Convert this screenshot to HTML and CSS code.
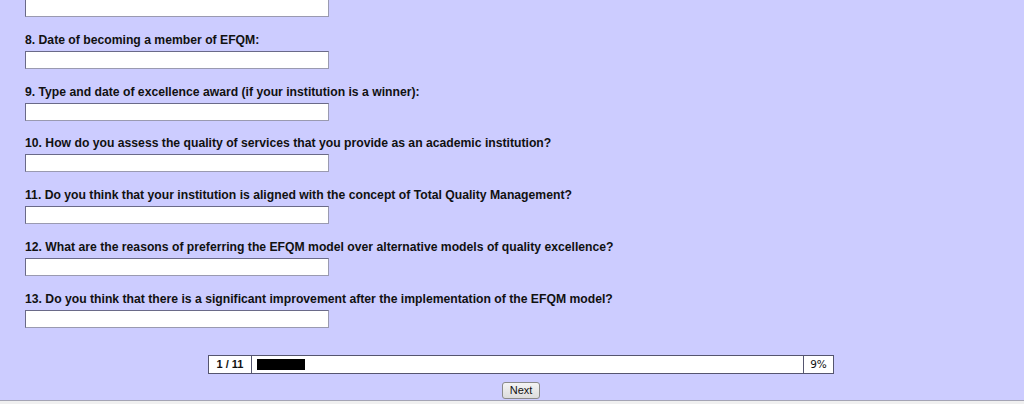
FILE: index.html
```html
<!DOCTYPE html>
<html>
<head>
<meta charset="utf-8">
<link rel="stylesheet" href="styles.css">
</head>
<body>
<div class="page">
  <div class="questions">
    <div class="item item-cut"><input class="field" type="text"></div>
    <div class="item"><label class="q">8. Date of becoming a member of EFQM:</label><input class="field" type="text"></div>
    <div class="item"><label class="q">9. Type and date of excellence award (if your institution is a winner):</label><input class="field" type="text"></div>
    <div class="item"><label class="q">10. How do you assess the quality of services that you provide as an academic institution?</label><input class="field" type="text"></div>
    <div class="item"><label class="q">11. Do you think that your institution is aligned with the concept of Total Quality Management?</label><input class="field" type="text"></div>
    <div class="item"><label class="q">12. What are the reasons of preferring the EFQM model over alternative models of quality excellence?</label><input class="field" type="text"></div>
    <div class="item"><label class="q">13. Do you think that there is a significant improvement after the implementation of the EFQM model?</label><input class="field" type="text"></div>
  </div>
  <div class="progress-wrap">
    <div class="progress">
      <div class="cell count">1 / 11</div>
      <div class="cell track"><div class="bar" style="width: 48px"></div></div>
      <div class="cell pct">9%</div>
    </div>
  </div>
  <div class="nav">
    <button class="btn" type="button">Next</button>
  </div>
</div>
<div class="footer"></div>
</body>
</html>
```
FILE: styles.css
```css
html, body {
  margin: 0;
  padding: 0;
  height: 404px;
  overflow: hidden;
}
body {
  background: #ccccff;
  font-family: "Liberation Sans", Arial, sans-serif;
  display: flex;
  flex-direction: column;
}
.page {
  height: 400px;
  overflow: hidden;
}
.questions {
  display: flex;
  flex-direction: column;
  gap: 14.8px;
  padding-left: 25px;
  margin-top: -1px;
}
.item {
  display: flex;
  flex-direction: column;
  align-items: flex-start;
}
.q {
  display: block;
  font-size: 12.2px;
  font-weight: bold;
  line-height: 16px;
  color: #111;
  margin-bottom: 3px;
}
.field {
  box-sizing: border-box;
  width: 304px;
  height: 18px;
  margin: 0;
  padding: 0 2px;
  background: #fff;
  border: 1px solid #7a7a96;
  border-top-color: #6a6a88;
  border-left-color: #6a6a88;
  border-right-color: #9a9ab0;
  border-bottom-color: #9a9ab0;
}
.progress-wrap {
  display: flex;
  justify-content: center;
  padding-left: 18px;
  margin-top: 27px;
}
.progress {
  display: flex;
  width: 626px;
  height: 19px;
  box-sizing: border-box;
  border: 1px solid #55556f;
  background: #fff;
}
.cell {
  display: flex;
  align-items: center;
  box-sizing: border-box;
  font-size: 11px;
  color: #111;
}
.count {
  width: 43px;
  justify-content: center;
  font-weight: bold;
  border-right: 1px solid #55556f;
}
.track {
  flex: 1;
  padding-left: 5px;
}
.bar {
  height: 11px;
  background: #000;
}
.pct {
  width: 30px;
  justify-content: center;
  font-family: "DejaVu Sans", Tahoma, sans-serif;
  font-size: 10.5px;
  border-left: 1px solid #55556f;
}
.nav {
  display: flex;
  justify-content: center;
  padding-left: 18px;
  margin-top: 8px;
}
.btn {
  box-sizing: border-box;
  width: 38px;
  height: 17px;
  padding: 0;
  font-family: "Liberation Sans", Arial, sans-serif;
  font-size: 11px;
  color: #111;
  background: linear-gradient(#f4f4f4, #dcdcdc);
  border: 1px solid #8a8a8a;
  border-radius: 3px;
}
.footer {
  flex: 1;
  border-top: 1px solid #a4a4b4;
  background: #f0f0f0;
}
```
